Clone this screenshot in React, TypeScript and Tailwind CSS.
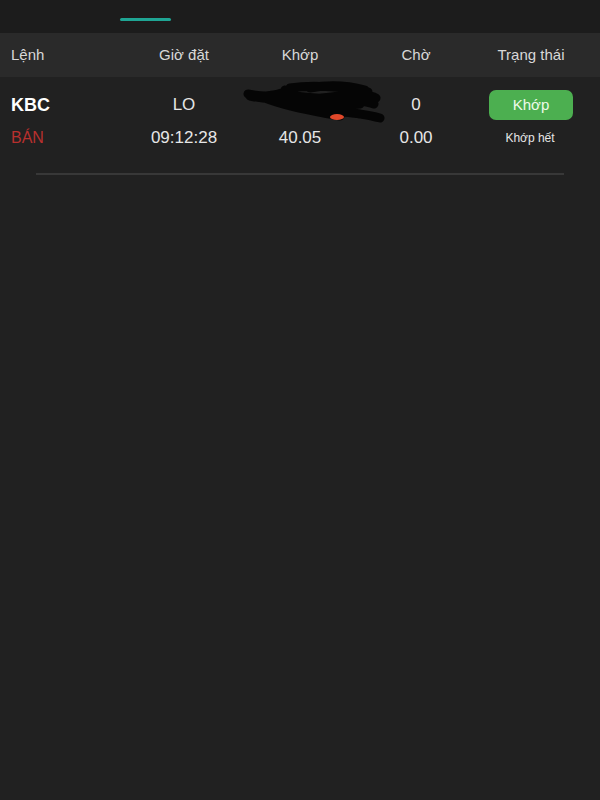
import React from "react";

const cols = "grid grid-cols-[126px_116px_116px_116px_114px] items-center";

function Scribble() {
  return (
    <svg className="absolute left-[240px] top-[3px]" width="150" height="46" viewBox="0 0 150 46">
      <path
        d="M8 14 C20 16 30 18 45 12 M50 8 C70 5 100 6 128 12 M10 16 C40 22 70 20 100 16 C120 14 132 15 136 18 M45 10 C60 20 90 28 120 24 M50 24 C70 30 110 30 140 38 M25 18 C50 28 80 32 100 36 M55 16 C80 20 120 18 134 24 M70 8 C90 4 110 6 125 10 M60 28 C80 34 100 30 120 34"
        stroke="#050505"
        strokeWidth="9"
        strokeLinecap="round"
        fill="none"
      />
      <ellipse cx="97" cy="37" rx="7" ry="3" fill="#e0482a" />
    </svg>
  );
}

export default function App() {
  return (
    <div className="w-[600px] h-[800px] bg-[#212121] font-['Liberation_Sans',sans-serif] text-[#e6e6e6] overflow-hidden">
      {/* TOP TABS */}
      <div className="h-[33px] bg-[#1c1c1c] relative">
        <div className="absolute left-[120px] top-[18px] w-[51px] h-[3px] rounded-full bg-[#1fa594]" />
      </div>

      {/* HEADER */}
      <div className={`${cols} h-[44px] bg-[#2a2a2a] text-[15px] text-[#d8d8d8]`}>
        <div className="pl-[11px]">Lệnh</div>
        <div className="text-center">Giờ đặt</div>
        <div className="text-center">Khớp</div>
        <div className="text-center">Chờ</div>
        <div className="text-center">Trạng thái</div>
      </div>

      {/* ROW */}
      <div className="relative pt-[12px]">
        <div className={`${cols} h-[32px] text-[17px]`}>
          <div className="pl-[11px] font-bold text-[18px] text-white">KBC</div>
          <div className="text-center">LO</div>
          <div className="text-center"></div>
          <div className="text-center">0</div>
          <div className="flex justify-end pr-[15px]">
            <div className="w-[84px] h-[30px] rounded-[7px] bg-[#4caf50] flex items-center justify-center text-[15px] text-[#eefbe9]">
              Khớp
            </div>
          </div>
        </div>
        <div className={`${cols} h-[32px] text-[17px] pt-[2px]`}>
          <div className="pl-[11px] text-[16px] text-[#b8302e]">BÁN</div>
          <div className="text-center">09:12:28</div>
          <div className="text-center">40.05</div>
          <div className="text-center">0.00</div>
          <div className="text-center text-[12px] pr-[2px]">Khớp hết</div>
        </div>
        <Scribble />
      </div>

      <div className="mx-[36px] mt-[20px] h-[2px] bg-[#383838]" />
    </div>
  );
}
